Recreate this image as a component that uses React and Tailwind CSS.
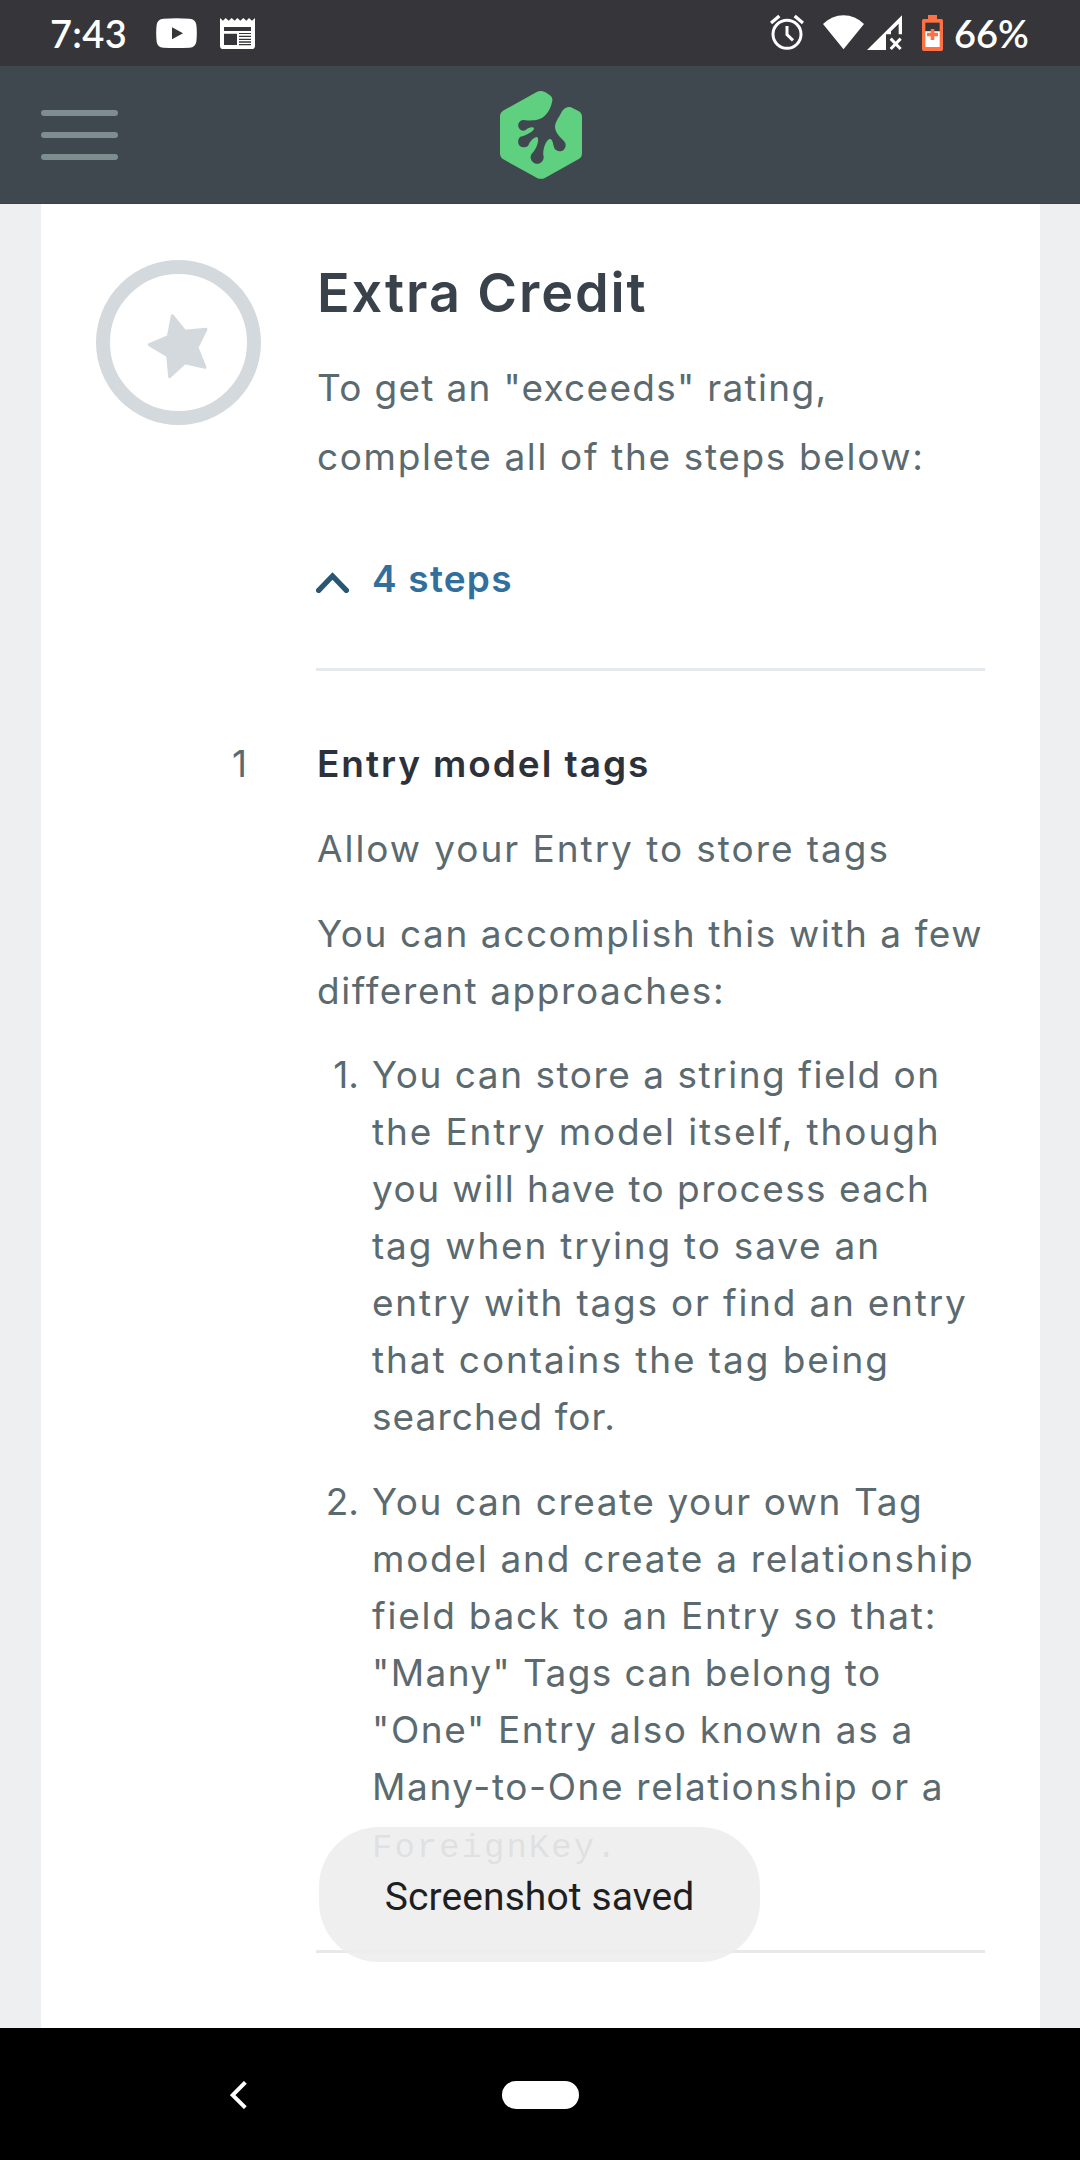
function StatusBar() {
  return (
    <div className="flex h-[66px] shrink-0 items-center bg-[#36363a] pl-[50px] pr-[51px] text-white">
      <span className="w-[106px] font-['Lato',sans-serif] text-[38px] leading-[68px] font-semibold tracking-[0.3px]">7:43</span>
      <svg className="mr-[23px] h-[66px] w-[41px]" viewBox="468 0 123 198">
        <path fill="#fff" fillRule="evenodd" d="M490 56Q529 53 569 56Q586 57 589 74Q592 99 589 125Q586 142 569 143Q529 145 490 143Q472 142 470 125Q467 99 470 74Q473 57 490 56ZM516 82V118L549 100Z" />
      </svg>
      <svg className="h-[66px] w-[35px]" viewBox="660 0 105 198">
        <path fill="#fff" fillRule="evenodd" d="M660 54L669 62L677 54L686 62L695 54L704 62L712 54L721 62L730 54L739 62L747 54L756 62L765 54V137Q765 147 755 147H670Q660 147 660 137ZM672 81V93H753V81ZM672 101V135H711V101ZM717 99V102H753V99ZM717 107V111H753V107ZM717 116V120H753V116ZM717 124V128H753V124ZM717 132V136H753V132Z" />
      </svg>
      <div className="ml-auto flex items-center">
        <svg className="mr-[19px] h-[66px] w-[34px]" viewBox="148 0 102 198" fill="none" stroke="#fff">
          <circle cx="199" cy="103" r="42" strokeWidth="9" />
          <path strokeWidth="9" d="M199 78V104L217 121" />
          <path strokeWidth="10" d="M151 69L176 48M222 48L247 69" />
        </svg>
        <svg className="mr-[3px] h-[66px] w-[41px]" viewBox="309 0 123 198">
          <path fill="#fff" d="M309 72Q336 46 370.500 46Q405 46 432 72L370.500 148Z" />
        </svg>
        <svg className="mr-[20px] h-[66px] w-[35px]" viewBox="441 0 105 198">
          <path fill="#fff" fillRule="evenodd" d="M441 150L546 46V103H536V71L513 94V103H498V150Z" />
          <path stroke="#fff" strokeWidth="9" d="M512 116L542 147M542 116L512 147" />
        </svg>
        <svg className="mr-[11px] h-[66px] w-[21px]" viewBox="606 0 63 198">
          <path fill="#ff7043" d="M624 45H651V57H664Q669 57 669 62V147Q669 153 664 153H611Q606 153 606 147V62Q606 57 611 57H624Z" />
          <path fill="#36363a" d="M616 68H659V94H616Z" />
          <path fill="#fff" d="M616 94H659V141H616Z" />
          <path stroke="#ff7043" strokeWidth="11" d="M637.500 87V120M621 103.500H654" />
        </svg>
        <span className="w-[75px] font-['Lato',sans-serif] text-[38px] leading-[68px] font-semibold whitespace-nowrap">66%</span>
      </div>
    </div>
  );
}

function Header() {
  return (
    <header className="grid h-[138px] shrink-0 grid-cols-3 items-center border-b border-[#3a4149] bg-[#3f474f]">
      <div className="ml-[41px] flex w-[77px] flex-col gap-4">
        <div className="h-[6px] rounded-full bg-[#7d8d90]" />
        <div className="h-[6px] rounded-full bg-[#7d8d90]" />
        <div className="h-[6px] rounded-full bg-[#7d8d90]" />
      </div>
      <svg className="ml-px h-[88px] w-[82px] justify-self-center" viewBox="90 63 246 264">
        <path
          fill="#5fcf80"
          d="M90 137Q91 127 99 122L200 66Q212 60 225 66L238 74Q249 81 247 92C244 110 236 125 226 136C212 150 196 153 166 151A16 16 0 1 0 166 181C174 173 191 168 192 176C190 184 174 192 160 198A17 17 0 1 0 178 219C183 212 190 203 199 201C206 201 205 211 203 220C200 232 195 240 190 246A19.500 19.500 0 1 0 220 256C218 240 226 213 238 207C246 205 248 214 251 228A18 18 0 1 0 284 216C277 206 256 193 255 170C256 155 265 145 272 131C280 115 290 108 303 112L324 122Q335 128 336 138V250Q336 263 325 268L226 323Q213 330 200 323L100 268Q90 262 90 250Z"
        />
      </svg>
    </header>
  );
}

function StarBadge() {
  return (
    <div className="mt-[7px] flex size-[165px] items-center justify-center rounded-full border-[14px] border-[#d3d9dd]">
      <svg className="size-[137px]" viewBox="90 101 411 411">
        <path
          fill="#d3d9dd"
          stroke="#d3d9dd"
          strokeWidth="9"
          strokeLinejoin="round"
          d="M277 226L315 273L378 267L351 322L375 381L315 367L269 409L263 346L208 313L265 289Z"
        />
      </svg>
    </div>
  );
}

export default function App() {
  return (
    <div className="flex h-[2160px] w-[1080px] flex-col overflow-hidden bg-[#edeff0] font-['Inter',sans-serif]">
      <StatusBar />
      <Header />
      <main className="relative mr-[40px] ml-[41px] flex-1 bg-white pt-[49px] pr-[55px] pl-[55px] text-[37px] leading-[57px] font-normal text-[#5b6a6f] [&_span]:whitespace-nowrap">
        <div className="grid grid-cols-[220px_669px]">
          <StarBadge />
          <section>
            <h1 className="mt-[4px] ml-px text-[54px] leading-[72px] font-semibold tracking-[1.9px] text-[#39424a]">Extra Credit</h1>
            <p className="mt-[24px] ml-px flex flex-col leading-[69px]">
              <span className="tracking-[1.3px]">To get an "exceeds" rating,</span>
              <span className="tracking-[1.64px]">complete all of the steps below:</span>
            </p>
            <div className="mt-[59px] flex items-center gap-[23px]">
              <svg className="h-[21px] w-[33px] translate-y-[4px]" viewBox="48 97 99 63">
                <path fill="none" stroke="#295673" strokeWidth="16" strokeLinecap="round" d="M56 152L97.500 109L139 152" strokeLinejoin="miter" />
              </svg>
              <span className="font-semibold tracking-[1.2px] text-[#336f9c]">4 steps</span>
            </div>
            <div className="mt-[61px] h-[3px] bg-[#e6e9ec]" />
          </section>
        </div>

        <div className="mt-[64px] grid grid-cols-[220px_669px]">
          <div className="pr-[69px] text-right">1</div>
          <section>
            <div className="ml-px">
              <h2 className="font-semibold tracking-[1.94px] text-[#2d3139]">Entry model tags</h2>
              <p className="mt-[28px] flex flex-col">
                <span className="tracking-[1.95px]">Allow your Entry to store tags</span>
              </p>
              <p className="mt-[28px] flex flex-col">
                <span className="tracking-[1.57px]">You can accomplish this with a few</span>
                <span className="tracking-[1.59px]">different approaches:</span>
              </p>
            </div>
            <ol className="mt-[27px] flex flex-col gap-[28px]">
              <li className="grid grid-cols-[43px_1fr] gap-[13px]">
                <div className="text-right">1.</div>
                <div className="flex flex-col">
                  <span className="tracking-[1.52px]">You can store a string field on</span>
                  <span className="tracking-[1.88px]">the Entry model itself, though</span>
                  <span className="tracking-[1.44px]">you will have to process each</span>
                  <span className="tracking-[1.79px]">tag when trying to save an</span>
                  <span className="tracking-[1.78px]">entry with tags or find an entry</span>
                  <span className="tracking-[1.92px]">that contains the tag being</span>
                  <span className="tracking-[1.05px]">searched for.</span>
                </div>
              </li>
              <li className="grid grid-cols-[43px_1fr] gap-[13px]">
                <div className="text-right">2.</div>
                <div className="flex flex-col">
                  <span className="tracking-[1.55px]">You can create your own Tag</span>
                  <span className="tracking-[1.73px]">model and create a relationship</span>
                  <span className="tracking-[1.75px]">field back to an Entry so that:</span>
                  <span className="tracking-[1.4px]">"Many" Tags can belong to</span>
                  <span className="tracking-[1.64px]">"One" Entry also known as a</span>
                  <span className="tracking-[1.61px]">Many-to-One relationship or a</span>
                  <code className="h-[57px] font-['Liberation_Mono',monospace] text-[34px] leading-[67px] font-normal tracking-[2px]">ForeignKey.</code>
                </div>
              </li>
            </ol>
            <div className="mt-[78px] h-[3px] bg-[#e6e9ec]" />
          </section>
        </div>

        <div className="absolute bottom-[66px] left-[278px] flex h-[135px] w-[441px] items-center justify-center rounded-[60px] bg-[#ededed]/90 pt-[5px] font-['Roboto',sans-serif] text-[39px] font-normal tracking-[0.1px] text-[#1f1f1f]">
          <span>Screenshot saved</span>
        </div>
      </main>
      <nav className="flex h-[132px] shrink-0 items-center bg-black">
        <svg className="mt-[2px] ml-[230px] h-[28px] w-[18px]" viewBox="91 211 54 84">
          <path fill="none" stroke="#fff" strokeWidth="12" d="M137 215L99 253.500L137 291" />
        </svg>
        <div className="mt-[1px] ml-[254px] h-[28px] w-[77px] rounded-full bg-white" />
      </nav>
    </div>
  );
}
